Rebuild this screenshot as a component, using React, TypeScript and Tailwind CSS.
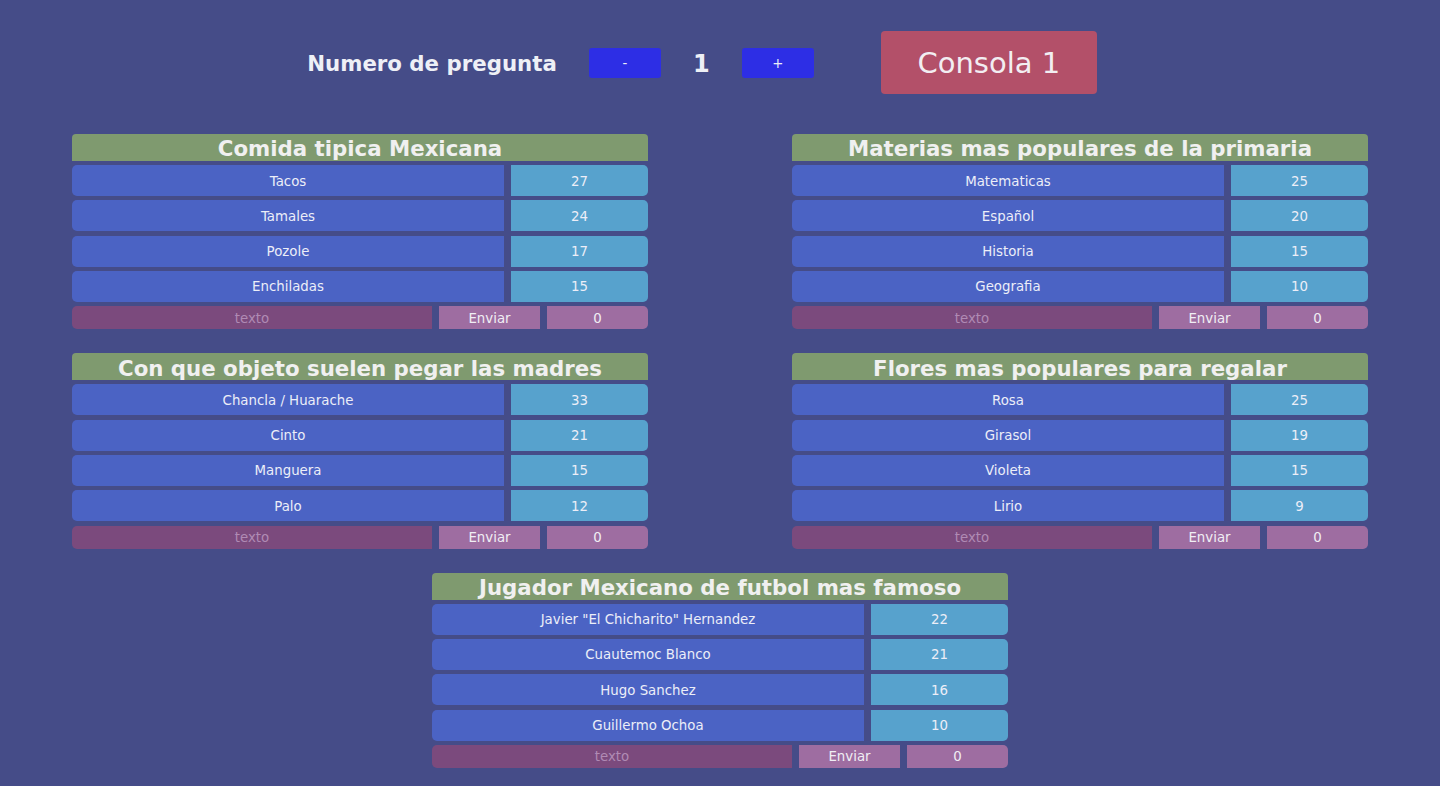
import { useState } from "react"

type Pregunta = {
  titulo: string
  respuestas: [string, number][]
}

const preguntas: Pregunta[] = [
  {
    titulo: "Comida tipica Mexicana",
    respuestas: [["Tacos", 27], ["Tamales", 24], ["Pozole", 17], ["Enchiladas", 15]],
  },
  {
    titulo: "Materias mas populares de la primaria",
    respuestas: [["Matematicas", 25], ["Español", 20], ["Historia", 15], ["Geografia", 10]],
  },
  {
    titulo: "Con que objeto suelen pegar las madres",
    respuestas: [["Chancla / Huarache", 33], ["Cinto", 21], ["Manguera", 15], ["Palo", 12]],
  },
  {
    titulo: "Flores mas populares para regalar",
    respuestas: [["Rosa", 25], ["Girasol", 19], ["Violeta", 15], ["Lirio", 9]],
  },
  {
    titulo: "Jugador Mexicano de futbol mas famoso",
    respuestas: [
      ['Javier "El Chicharito" Hernandez', 22],
      ["Cuautemoc Blanco", 21],
      ["Hugo Sanchez", 16],
      ["Guillermo Ochoa", 10],
    ],
  },
]

function Tablero({ pregunta }: { pregunta: Pregunta }) {
  const [texto, setTexto] = useState("")
  return (
    <div className="w-[576px] flex flex-col">
      <div className="h-[27px] bg-[#7f9a6f] rounded-t-[4px] flex items-center justify-center text-[21.3px] font-bold text-[#f0f0f0] leading-none pt-[3px]">
        {pregunta.titulo}
      </div>
      <div className="flex flex-col gap-[4.33px] mt-[4px]">
        {pregunta.respuestas.map(([nombre, puntos]) => (
          <div key={nombre} className="flex gap-[7px] h-[31px] text-[13.33px] text-[#eceef8]">
            <div className="flex-1 bg-[#4b63c4] rounded-l-[5px] flex items-center justify-center pt-[2px]">{nombre}</div>
            <div className="w-[137px] bg-[#57a2cd] rounded-r-[5px] flex items-center justify-center pt-[2px]">{puntos}</div>
          </div>
        ))}
        <div className="flex gap-[7px] h-[23px] text-[13.33px]">
          <input
            value={texto}
            onChange={(e) => setTexto(e.target.value)}
            placeholder="texto"
            className="w-[360px] bg-[#7b4a7d] rounded-l-[5px] text-center text-[#eceef8] placeholder:text-[#b08ab4] outline-none pt-[2px]"
          />
          <button className="w-[101px] bg-[#9e6da1] text-[#f0eef4] pt-[2px]">Enviar</button>
          <div className="flex-1 bg-[#9e6da1] rounded-r-[5px] flex items-center justify-center text-[#f0eef4] pt-[2px]">0</div>
        </div>
      </div>
    </div>
  )
}

export default function App() {
  const [numero, setNumero] = useState(1)
  return (
    <div
      className="min-h-[786px] w-full bg-[#454c88] pt-[31px] pb-[18px]"
      style={{ fontFamily: '"DejaVu Sans", sans-serif' }}
    >
      <div className="flex items-center justify-center pl-[307px] pr-[343px]">
        <span className="text-[21.3px] font-bold text-[#eef0f6] pt-[3px]">Numero de pregunta</span>
        <button
          onClick={() => setNumero((n) => Math.max(1, n - 1))}
          className="ml-[32px] w-[72px] h-[30px] bg-[#2d2ee5] rounded-[3px] text-[13.33px] text-[#eceef8] pt-[2px]"
        >
          -
        </button>
        <span className="w-[81px] text-center text-[24px] font-bold text-[#eef0f6] pt-[2px]">{numero}</span>
        <button
          onClick={() => setNumero((n) => n + 1)}
          className="w-[72px] h-[30px] bg-[#2d2ee5] rounded-[3px] text-[13.33px] text-[#eceef8] pt-[2px]"
        >
          +
        </button>
        <button className="ml-[67px] w-[216px] h-[63px] bg-[#b35069] rounded-[4px] text-[29px] text-[#f2eef2] pt-[2px]">
          Consola 1
        </button>
      </div>
      <div className="mt-[40px] flex flex-col gap-[24px] px-[72px]">
        <div className="flex justify-between">
          <Tablero pregunta={preguntas[0]} />
          <Tablero pregunta={preguntas[1]} />
        </div>
        <div className="flex justify-between">
          <Tablero pregunta={preguntas[2]} />
          <Tablero pregunta={preguntas[3]} />
        </div>
        <div className="flex justify-center">
          <Tablero pregunta={preguntas[4]} />
        </div>
      </div>
    </div>
  )
}
